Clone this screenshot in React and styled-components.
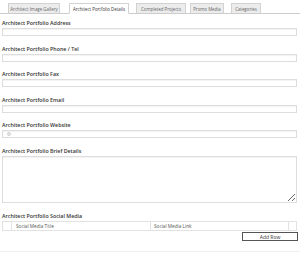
import React from 'react'
import styled, { createGlobalStyle } from 'styled-components'

const Global = createGlobalStyle`
  body {
    margin: 0;
    background: #fff;
    font-family: "Open Sans", "Liberation Sans", sans-serif;
  }
`

const Page = styled.div`
  width: 300px;
  height: 252px;
  box-sizing: border-box;
  padding: 0 3px 0 2px;
  border-bottom: 1px solid #eee;
`

const TabBar = styled.div`
  display: flex;
  align-items: flex-end;
  height: 13px;
  padding-left: 8px;
  border-bottom: 1px solid #ccc;
  margin: 0 -3px 6px -2px;
`

const Tab = styled.div`
  box-sizing: border-box;
  height: ${p => (p.$active ? '11px' : '10px')};
  margin-bottom: ${p => (p.$active ? '-1px' : '0')};
  margin-left: ${p => p.$gap}px;
  width: ${p => p.$w}px;
  display: flex;
  align-items: center;
  justify-content: center;
  font-size: 4.4px;
  color: ${p => (p.$active ? '#333' : '#666')};
  background: ${p => (p.$active ? '#fff' : '#ececec')};
  border: 1px solid #d2d2d2;
  border-bottom: ${p => (p.$active ? '1px solid #fff' : 'none')};
  white-space: nowrap;
  overflow: hidden;
`

const Field = styled.div`
  margin-bottom: ${p => p.$mb || 9.5}px;
`

const Label = styled.div`
  font-size: 5.3px;
  font-weight: 600;
  color: #333;
  line-height: 6px;
  margin-bottom: 2px;
`

const Input = styled.div`
  box-sizing: border-box;
  height: 8px;
  border: 1px solid #ddd;
  box-shadow: inset 0 1px 1px rgba(0, 0, 0, 0.05);
  display: flex;
  align-items: center;
  padding-left: 4px;
`

const TextArea = styled.textarea`
  display: block;
  box-sizing: border-box;
  width: 100%;
  height: 47px;
  margin: 0;
  border: 1px solid #ddd;
  box-shadow: inset 0 1px 1px rgba(0, 0, 0, 0.05);
  outline: none;
`

const Table = styled.div`
  display: grid;
  grid-template-columns: 8px 139px 138px 1fr;
  height: 10px;
  box-sizing: border-box;
  border: 1px solid #e2e2e2;
`

const Cell = styled.div`
  display: flex;
  align-items: center;
  padding-left: ${p => p.$pl || 0}px;
  font-size: 4.7px;
  color: #555;
  border-left: ${p => (p.$first ? 'none' : '1px solid #e2e2e2')};
  white-space: nowrap;
`

const Actions = styled.div`
  display: flex;
  justify-content: flex-end;
  margin: 1px -1px 0 0;
`

const Button = styled.div`
  box-sizing: border-box;
  width: 56px;
  height: 9px;
  border: 1px solid #555;
  background: #fff;
  display: flex;
  align-items: center;
  justify-content: center;
  font-size: 5px;
  color: #333;
`

const tabs = [
  { t: 'Architect Image Gallery', w: 52, gap: 0 },
  { t: 'Architect Portfolio Details', w: 60, gap: 9, active: true },
  { t: 'Completed Projects', w: 50, gap: 7 },
  { t: 'Promo Media', w: 34, gap: 4 },
  { t: 'Categories', w: 30, gap: 7 },
]

const fields = [
  'Architect Portfolio Address',
  'Architect Portfolio Phone / Tel',
  'Architect Portfolio Fax',
  'Architect Portfolio Email',
]

const App = () => {
  return (
    <>
      <Global />
      <Page>
        <TabBar>
          {tabs.map(tab => (
            <Tab key={tab.t} $w={tab.w} $gap={tab.gap} $active={tab.active}>
              {tab.t}
            </Tab>
          ))}
        </TabBar>
        {fields.map(f => (
          <Field key={f}>
            <Label>{f}</Label>
            <Input />
          </Field>
        ))}
        <Field $mb={10}>
          <Label>Architect Portfolio Website</Label>
          <Input>
            <svg width="4" height="4" viewBox="0 0 10 10">
              <circle cx="5" cy="5" r="4" fill="none" stroke="#bbb" strokeWidth="1.2" />
              <path d="M1 5h8M5 1c2 2 2 6 0 8M5 1c-2 2-2 6 0 8" fill="none" stroke="#bbb" strokeWidth="0.8" />
            </svg>
          </Input>
        </Field>
        <Field $mb={10}>
          <Label>Architect Portfolio Brief Details</Label>
          <TextArea />
        </Field>
        <Label>Architect Portfolio Social Media</Label>
        <Table>
          <Cell $first />
          <Cell $pl={4}>Social Media Title</Cell>
          <Cell $pl={3}>Social Media Link</Cell>
          <Cell />
        </Table>
        <Actions>
          <Button>Add Row</Button>
        </Actions>
      </Page>
    </>
  )
}

export default App
